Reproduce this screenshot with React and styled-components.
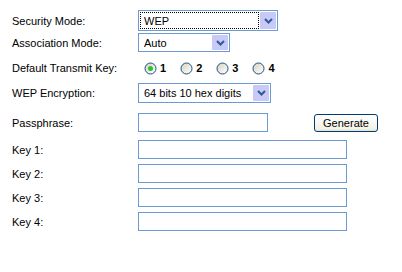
import React from 'react';
import styled, { createGlobalStyle } from 'styled-components';

const borderBlue = "#6b9bd2";

const GlobalStyle = createGlobalStyle`
  body {
    margin: 0;
    background: #ffffff;
    color: #000000;
    font-family: "Liberation Sans", Arial, sans-serif;
    font-size: 11px;
  }
`;

const Form = styled.div`
  display: flex;
  flex-direction: column;
  padding: 10px 0 0 12px;
`;

const Row = styled.div`
  display: grid;
  grid-template-columns: 126px auto;
  align-items: center;
  height: ${p => p.$h}px;
  margin-top: ${p => p.$mt || 0}px;
`;

const Label = styled.div`
  white-space: nowrap;
`;

const Controls = styled.div`
  display: flex;
  align-items: center;
  padding-left: ${p => p.$indent || 0}px;
`;

const SelectBox = styled.div`
  box-sizing: border-box;
  width: ${p => p.$w}px;
  height: ${p => p.$h}px;
  border: 1px solid ${borderBlue};
  background: #ffffff;
  display: flex;
  align-items: stretch;
  padding: 1px;
  gap: 1px;
`;

const SelectValue = styled.div`
  flex: 1;
  box-sizing: border-box;
  display: flex;
  align-items: center;
  padding-left: 3px;
  border: 1px ${p => (p.$focus ? 'dotted #000000' : 'solid transparent')};
  white-space: nowrap;
`;

const ArrowBox = styled.div`
  width: 16px;
  background: #c9c9f7;
  display: flex;
  align-items: center;
  justify-content: center;
  border-radius: 1px;
`;

const RadioItem = styled.label`
  display: flex;
  align-items: center;
  margin-right: ${p => p.$last ? 0 : 14}px;
  font-weight: bold;
  font-size: 11px;
  gap: 3px;
`;

const TextInput = styled.input`
  box-sizing: border-box;
  width: ${p => p.$w}px;
  height: 19px;
  border: 1px solid ${borderBlue};
  background: #ffffff;
  padding: 0 2px;
  margin: 0;
  outline: none;
  font-family: inherit;
  font-size: 11px;
`;

const Button = styled.button`
  box-sizing: border-box;
  width: 64px;
  height: 18px;
  margin: 0 0 0 46px;
  padding: 0;
  border: 1px solid #003c74;
  border-radius: 3px;
  background: linear-gradient(#ffffff, #f4f2e6 85%, #e6e2c8);
  font-family: inherit;
  font-size: 11px;
  color: #000000;
`;

function Chevron() {
  return (
    <svg width="9" height="6" viewBox="0 0 9 6">
      <path d="M1 1 L4.5 4.5 L8 1" fill="none" stroke="#2d5b92" strokeWidth="2" />
    </svg>
  );
}

function Select({ w, h, value, focus }) {
  return (
    <SelectBox $w={w} $h={h}>
      <SelectValue $focus={focus}>{value}</SelectValue>
      <ArrowBox><Chevron /></ArrowBox>
    </SelectBox>
  );
}

function Radio({ checked }) {
  return (
    <svg width="13" height="13" viewBox="0 0 13 13">
      <defs>
        <linearGradient id="rg" x1="0" y1="0" x2="1" y2="1">
          <stop offset="0" stopColor="#cfcdc2" />
          <stop offset="0.5" stopColor="#ece9df" />
          <stop offset="1" stopColor="#ffffff" />
        </linearGradient>
      </defs>
      <circle cx="6.5" cy="6.5" r="5.5" fill="url(#rg)" stroke="#1c5180" strokeWidth="1" />
      {checked && <circle cx="6.5" cy="6.5" r="2.5" fill="#2fbf2f" />}
    </svg>
  );
}

const keys = ["1", "2", "3", "4"];

export default function App() {
  return (
    <>
      <GlobalStyle />
      <Form>
        <Row $h={21}>
          <Label>Security Mode:</Label>
          <Controls><Select w={140} h={21} value="WEP" focus /></Controls>
        </Row>
        <Row $h={19} $mt={2}>
          <Label>Association Mode:</Label>
          <Controls><Select w={92} h={19} value="Auto" /></Controls>
        </Row>
        <Row $h={20} $mt={6}>
          <Label>Default Transmit Key:</Label>
          <Controls $indent={6}>
            {keys.map((k, i) => (
              <RadioItem key={k} $last={i === keys.length - 1}>
                <Radio checked={i === 0} />{k}
              </RadioItem>
            ))}
          </Controls>
        </Row>
        <Row $h={20} $mt={5}>
          <Label>WEP Encryption:</Label>
          <Controls><Select w={133} h={20} value="64 bits 10 hex digits" /></Controls>
        </Row>
        <Row $h={19} $mt={10}>
          <Label>Passphrase:</Label>
          <Controls>
            <TextInput $w={130} />
            <Button>Generate</Button>
          </Controls>
        </Row>
        {keys.map((k, i) => (
          <Row key={k} $h={19} $mt={i === 0 ? 8 : 5}>
            <Label>Key {k}:</Label>
            <Controls><TextInput $w={209} /></Controls>
          </Row>
        ))}
      </Form>
    </>
  );
}
